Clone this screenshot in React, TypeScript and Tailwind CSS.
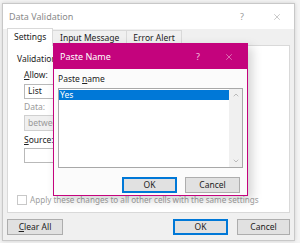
import { ChevronDown, ChevronUp, X } from 'lucide-react';

const font = { fontFamily: '"Noto Sans", "Open Sans", sans-serif' };

function Button({ label, primary, className }: { label: React.ReactNode; primary?: boolean; className: string }) {
  return (
    <div
      className={`flex items-center justify-center h-[16px] bg-[#e1e1e1] text-[8.5px] text-[#222] ${
        primary ? 'border-2 border-[#0078d7]' : 'border border-[#adadad]'
      } ${className}`}
    >
      {label}
    </div>
  );
}

export default function App() {
  return (
    <div
      className="relative w-[300px] h-[243px] overflow-hidden bg-[#f4f4f4] pt-[3px] pl-[2px]"
      style={font}
    >
      {/* Data Validation dialog */}
      <div className="w-[293px] h-[238px] flex flex-col bg-[#f0f0f0] border border-[#c8c8c8] shadow-[0_0_4px_rgba(0,0,0,0.15)]">
        {/* title bar */}
        <div className="h-[25px] flex items-center bg-white px-[6px] shrink-0">
          <span className="text-[9px] text-[#8a8a8a]">Data Validation</span>
          <span className="ml-auto mr-[28px] text-[9px] text-[#9a9a9a]">?</span>
          <X className="w-[10px] h-[10px] text-[#9a9a9a] mr-[6px]" strokeWidth={1.3} />
        </div>

        {/* tabs */}
        <div className="flex items-end h-[16px] pl-[4px] shrink-0 text-[8.5px] text-[#222]">
          <div className="h-[18px] -mb-px z-10 px-[6px] flex items-center bg-white border border-b-0 border-[#d9d9d9] w-[46px]">
            Settings
          </div>
          <div className="h-[15px] px-[7px] flex items-center border border-b-0 border-l-0 border-[#d9d9d9]">
            Input Message
          </div>
          <div className="h-[15px] px-[6px] flex items-center border border-b-0 border-l-0 border-[#d9d9d9]">
            Error Alert
          </div>
        </div>

        {/* settings panel */}
        <div className="mx-[4px] h-[168px] bg-white border border-[#d9d9d9] shrink-0 flex flex-col px-[9px] pt-[7px] text-[8.5px] text-[#222]">
          <div className="leading-[12px]">Validation criteria</div>
          <div className="pl-[7px] mt-[4px] leading-[12px]">
            <span className="underline">A</span>llow:
          </div>
          <div className="ml-[7px] mt-[3px] h-[15px] w-[120px] border border-[#b9b9b9] flex items-center px-[3px]">
            List
          </div>
          <div className="pl-[7px] mt-[2px] leading-[12px] text-[#9a9a9a]">Data:</div>
          <div className="ml-[7px] mt-[2px] h-[16px] w-[120px] border border-[#d0d0d0] bg-[#f0f0f0] flex items-center px-[3px] text-[#9a9a9a]">
            between
          </div>
          <div className="pl-[7px] mt-[3px] leading-[12px]">
            <span className="underline">S</span>ource:
          </div>
          <div className="ml-[7px] mt-[2px] h-[15px] w-[120px] border border-[#b9b9b9] bg-white" />
          <div className="mt-auto mb-[6px] flex items-center gap-[3px] text-[#a0a0a0]">
            <div className="w-[10px] h-[10px] border border-[#c8c8c8] bg-white" />
            <span className="text-[8.1px]">Apply these changes to all other cells with the same settings</span>
          </div>
        </div>

        {/* footer */}
        <div className="flex items-start mt-[6px] px-[4px]">
          <Button
            className="w-[56px]"
            label={
              <span>
                <span className="underline">C</span>lear All
              </span>
            }
          />
          <Button className="w-[55px] ml-auto" primary label="OK" />
          <Button className="w-[53px] ml-[9px]" label="Cancel" />
        </div>
      </div>

      {/* Paste Name dialog */}
      <div className="absolute left-[53px] top-[43px] w-[195px] h-[153px] flex flex-col bg-[#fbfbfb] border border-[#c4037d] shadow-[4px_4px_10px_rgba(0,0,0,0.18)]">
        <div className="h-[25px] shrink-0 flex items-center bg-[#c4037d] pl-[6px] text-white">
          <span className="text-[9px]">Paste Name</span>
          <span className="ml-auto mr-[24px] text-[9px] text-[#f3c3df]">?</span>
          <X className="w-[10px] h-[10px] text-[#f3c3df] mr-[13px]" strokeWidth={1.3} />
        </div>
        <div className="flex flex-col px-[4px] pt-[4px] text-[8.5px] text-[#222]">
          <div className="leading-[12px]">
            Paste <span className="underline">n</span>ame
          </div>
          <div className="mt-[3px] h-[80px] border border-[#a8a8a8] bg-white flex">
            <div className="flex-1 pt-[1px]">
              <div className="h-[10px] bg-[#0078d7] text-white flex items-center pl-[1px] leading-none">Yes</div>
            </div>
            <div className="w-[13px] bg-[#f0f0f0] flex flex-col items-center justify-between py-[2px]">
              <ChevronUp className="w-[8px] h-[8px] text-[#a0a0a0]" strokeWidth={2} />
              <ChevronDown className="w-[8px] h-[8px] text-[#a0a0a0]" strokeWidth={2} />
            </div>
          </div>
          <div className="flex mt-[9px] pl-[64px]">
            <Button className="w-[55px]" primary label="OK" />
            <Button className="w-[55px] ml-[8px]" label="Cancel" />
          </div>
        </div>
      </div>
    </div>
  );
}
